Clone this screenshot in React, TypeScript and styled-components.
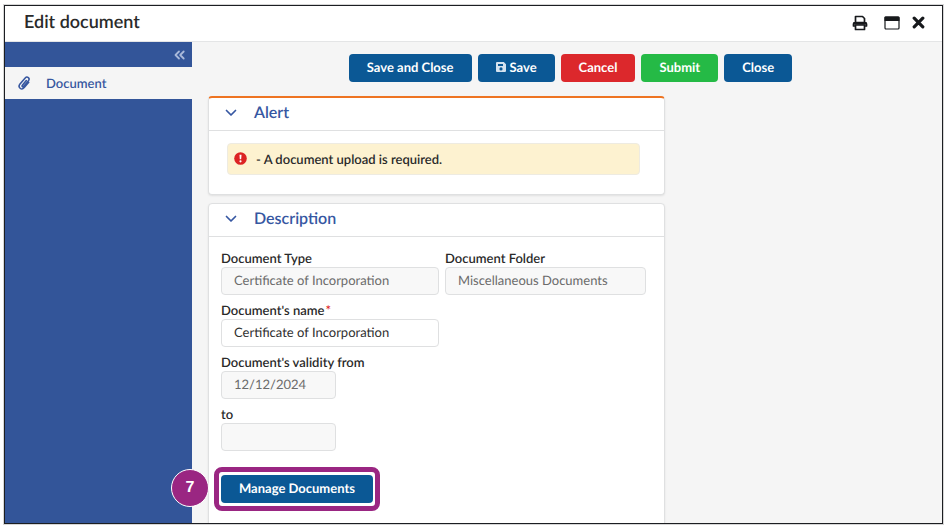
import React from "react";
import styled, { createGlobalStyle, css } from "styled-components";

const GlobalStyle = createGlobalStyle`
  * { box-sizing: border-box; }
  body {
    margin: 0;
    background: #fff;
    color: #2a2a2a;
    font: 13px/18px Lato, "Liberation Sans", sans-serif;
    text-rendering: geometricPrecision;
  }
  button, input { font: inherit; text-rendering: inherit; }
`;

const Page = styled.div`
  height: 100vh;
  padding: 5px 9px 6px 4px;
`;

const Window = styled.div`
  display: flex;
  flex-direction: column;
  height: 100%;
  border: 1px solid #1c1e22;
  box-shadow: 0 0 0 1px #d6d6d6;
  overflow: hidden;
`;

const TitleBar = styled.header`
  display: flex;
  flex: none;
  align-items: center;
  height: 36px;
  padding: 0 17px 5px 19px;
  border-bottom: 1px solid #e4e5e6;
`;

const Title = styled.h1`
  flex: 1;
  margin: 0;
  font-size: 18px;
  line-height: 24px;
  font-weight: 600;
`;

const IconButton = styled.button<{ $gap?: number }>`
  display: flex;
  padding: 3px 0 0;
  margin-left: ${(p) => p.$gap ?? 0}px;
  border: 0;
  background: none;
  color: #17191c;
`;

const Body = styled.div`
  display: flex;
  flex: 1;
  min-height: 0;
  background: #f5f5f5;
`;

const Sidebar = styled.nav`
  flex: none;
  width: 187px;
  background: #335599;
`;

const Collapse = styled.button`
  display: flex;
  align-items: center;
  justify-content: flex-end;
  width: 100%;
  height: 25px;
  padding: 0 7px 0 0;
  border: 0;
  background: none;
  color: #a9b9da;
`;

const NavLink = styled.a`
  display: flex;
  align-items: center;
  gap: 16px;
  height: 32px;
  padding: 0 0 1px 13px;
  background: #f5f5f5;
  color: #3858a0;
  font-weight: 600;
  text-decoration: none;
`;

const Content = styled.main`
  flex: 1;
  min-width: 0;
  padding: 12px 9px 0 16px;
`;

const Toolbar = styled.div`
  display: flex;
  justify-content: center;
  gap: 6px;
  margin-bottom: 14px;
`;

const tones = { blue: "#0b5895", red: "#dc282c", green: "#25ba46" };

const Button = styled.button<{ $tone?: keyof typeof tones }>`
  display: flex;
  align-items: center;
  gap: 4px;
  height: 28px;
  padding: 0 18px 2px;
  border: 0;
  border-radius: 4px;
  background: ${(p) => tones[p.$tone ?? "blue"]};
  color: #fff;
  font-weight: 700;
  white-space: nowrap;
`;

const Panel = styled.section<{ $accent?: boolean }>`
  max-width: 457px;
  margin-bottom: 8px;
  border: 1px solid #dfe0e1;
  border-radius: 4px;
  background: #fff;
  box-shadow: 0 1px 2px #e0e0e0;
  ${(p) =>
    p.$accent &&
    css`
      border-top: 2px solid #ee7422;
    `}
`;

const PanelHeader = styled.h2`
  display: flex;
  align-items: center;
  gap: 17px;
  height: 33px;
  margin: 0;
  padding: 0 0 2px 16px;
  border-bottom: 1px solid #dfe0e1;
  color: #3657a2;
  font-size: 16px;
  line-height: 20px;
  font-weight: 600;
`;

const AlertArea = styled.div`
  padding: 12px 24px 19px 18px;
`;

const AlertBox = styled.div`
  display: flex;
  align-items: center;
  gap: 9px;
  height: 32px;
  padding: 0 0 1px 6px;
  border: 1px solid #eeebe1;
  border-radius: 4px;
  background: #fdf2d0;
  font-weight: 600;
`;

const Form = styled.form`
  display: flex;
  flex-direction: column;
  gap: 6px;
  padding: 12px 18px 40px 12px;
`;

const FieldRow = styled.div`
  display: grid;
  grid-template-columns: 218fr 201fr;
  gap: 6px;
`;

const Field = styled.div<{ $short?: boolean }>`
  display: flex;
  flex-direction: column;
  max-width: ${(p) => (p.$short ? "115px" : "none")};
`;

const Label = styled.label`
  font-weight: 600;
  white-space: nowrap;
`;

const Required = styled.span`
  margin-left: 1px;
  color: #e02828;
`;

const Input = styled.input`
  width: 100%;
  height: 28px;
  padding: 0 12px 2px;
  border: 1px solid #dfe0e1;
  border-radius: 4px;
  background: #fff;
  color: #2f2f2f;
  &:read-only {
    background: #f8f8f8;
    color: #6b6b6b;
  }
`;

const Callout = styled.div`
  position: relative;
  align-self: flex-start;
  margin-top: 18px;
`;

const Ring = styled.span`
  position: absolute;
  inset: -8px -7px;
  border: 5px solid #9a2682;
  border-radius: 8px;
  pointer-events: none;
`;

const StepBadge = styled.span`
  position: absolute;
  top: -6px;
  left: -50px;
  display: flex;
  align-items: center;
  justify-content: center;
  width: 38px;
  height: 38px;
  border: 1px solid #fff;
  border-radius: 50%;
  background: #9a2682;
  color: #fff;
  font: 700 16px/18px "Liberation Sans", sans-serif;
`;

const Chevron = () => (
  <svg width="12" height="8" viewBox="0 0 12 8" fill="none" stroke="currentColor" strokeWidth="1.7" strokeLinecap="round" strokeLinejoin="round" aria-hidden="true">
    <path d="M1.5 1.5 6 6l4.5-4.5" />
  </svg>
);

const PrinterIcon = () => (
  <svg width="16" height="16" viewBox="0 0 16 16" fill="none" stroke="currentColor" strokeWidth="1.7" strokeLinejoin="round" aria-hidden="true">
    <path d="M3.500 7V1.500h7l2 2V7M3.500 11H1.500V9c0-1 .7-1.500 1.500-1.500h10c.8 0 1.500.5 1.500 1.500v2h-2" />
    <path d="M3.500 10h9v4.500h-9z" />
    <path d="M2 8.500h12" strokeWidth="2.400" />
  </svg>
);

const MaximizeIcon = () => (
  <svg width="16" height="14" viewBox="0 0 16 14" aria-hidden="true">
    <rect x="1" y="1" width="14" height="12" rx="1" fill="#fff" stroke="currentColor" strokeWidth="1.2" />
    <path d="M.5 1.5q0-1 1-1h13q1 0 1 1V5H.5z" fill="currentColor" />
  </svg>
);

const CloseIcon = () => (
  <svg width="13" height="13" viewBox="0 0 13 13" stroke="currentColor" strokeWidth="3.2" strokeLinecap="round" aria-hidden="true">
    <path d="m2.200 2.200 8.600 8.600M10.800 2.200l-8.600 8.600" />
  </svg>
);

const CollapseIcon = () => (
  <svg width="11" height="10" viewBox="0 0 11 10" fill="none" stroke="currentColor" strokeWidth="1.8" strokeLinecap="round" strokeLinejoin="round" aria-hidden="true">
    <path d="M5 1.500 1.500 5 5 8.500M9.700 1.500 6.200 5l3.500 3.500" />
  </svg>
);

const ClipIcon = () => (
  <svg width="12" height="14" viewBox="0 0 12 14" fill="none" stroke="currentColor" strokeWidth="1.6" strokeLinecap="round" aria-hidden="true">
    <path d="m8.300 4.600-3.900 4.600c-.9 1.100.4 2.200 1.300 1.200l4.700-5.600c2-2.500-1.200-5.100-3.200-2.800L2 8.100c-2.600 3.200 1.500 6.700 4.200 3.500l4.500-5.300" />
  </svg>
);

const SaveIcon = () => (
  <svg width="10" height="10" viewBox="0 0 10 10" aria-hidden="true">
    <path fill="#d5e2ef" fillRule="evenodd" d="M1 0h6.800L10 2.200V9q0 1-1 1H1Q0 10 0 9V1q0-1 1-1zM2 2v2h5V2zM5 5.300a1.600 1.600 0 1 0 0 3.200 1.600 1.600 0 0 0 0-3.200z" />
  </svg>
);

const AlertIcon = () => (
  <svg width="13" height="13" viewBox="0 0 13 13" aria-hidden="true">
    <circle cx="6.500" cy="6.500" r="6.300" fill="#dc2323" />
    <path d="M5.500 2.700h2L7.200 7.300H5.800z" fill="#fff" />
    <circle cx="6.500" cy="9.300" r="1.100" fill="#fff" />
  </svg>
);

export default function App() {
  return (
    <Page>
      <GlobalStyle />
      <Window>
        <TitleBar>
          <Title>Edit document</Title>
          <IconButton aria-label="Print"><PrinterIcon /></IconButton>
          <IconButton $gap={16} aria-label="Maximize"><MaximizeIcon /></IconButton>
          <IconButton $gap={12} aria-label="Close window"><CloseIcon /></IconButton>
        </TitleBar>
        <Body>
          <Sidebar>
            <Collapse aria-label="Collapse sidebar"><CollapseIcon /></Collapse>
            <NavLink href="#document"><ClipIcon />Document</NavLink>
          </Sidebar>
          <Content>
            <Toolbar>
              <Button>Save and Close</Button>
              <Button><SaveIcon />Save</Button>
              <Button $tone="red">Cancel</Button>
              <Button $tone="green">Submit</Button>
              <Button>Close</Button>
            </Toolbar>
            <Panel $accent>
              <PanelHeader><Chevron />Alert</PanelHeader>
              <AlertArea>
                <AlertBox role="alert"><AlertIcon />- A document upload is required.</AlertBox>
              </AlertArea>
            </Panel>
            <Panel>
              <PanelHeader><Chevron />Description</PanelHeader>
              <Form id="document">
                <FieldRow>
                  <Field>
                    <Label htmlFor="type">Document Type</Label>
                    <Input id="type" readOnly defaultValue="Certificate of Incorporation" />
                  </Field>
                  <Field>
                    <Label htmlFor="folder">Document Folder</Label>
                    <Input id="folder" readOnly defaultValue="Miscellaneous Documents" />
                  </Field>
                </FieldRow>
                <FieldRow>
                  <Field>
                    <Label htmlFor="name">Document's name<Required>*</Required></Label>
                    <Input id="name" required defaultValue="Certificate of Incorporation" />
                  </Field>
                </FieldRow>
                <Field $short>
                  <Label htmlFor="from">Document's validity from</Label>
                  <Input id="from" readOnly defaultValue="12/12/2024" />
                </Field>
                <Field $short>
                  <Label htmlFor="to">to</Label>
                  <Input id="to" readOnly defaultValue="" />
                </Field>
                <Callout>
                  <Ring />
                  <StepBadge>7</StepBadge>
                  <Button type="button">Manage Documents</Button>
                </Callout>
              </Form>
            </Panel>
          </Content>
        </Body>
      </Window>
    </Page>
  );
}
